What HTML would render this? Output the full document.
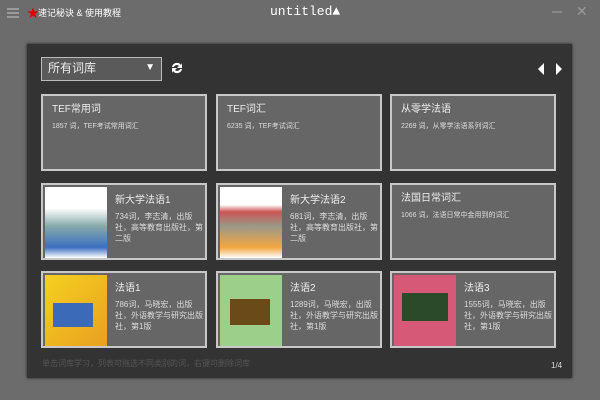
<!DOCTYPE html>
<html><head><meta charset="utf-8"><style>
*{margin:0;padding:0;box-sizing:border-box}
body{width:600px;height:400px;background:#6c6c6c;font-family:"Liberation Sans","Noto Sans CJK SC",sans-serif;color:#eee;position:relative;overflow:hidden}
.a{position:absolute}
.panel{left:27px;top:44px;width:545px;height:334px;background:#333;box-shadow:0 0 3px #222}
.card{position:absolute;width:166px;height:77px;background:#666;border:2px solid #c8c8c8;font-size:9px}
.card .t{position:absolute;left:9px;top:4px;font-size:10px;color:#eee}
.card .d{position:absolute;left:9px;top:25px;font-size:7px;color:#ddd}
.card.b .t{left:72px;top:6px}
.card.b .d{left:72px;top:26px;width:88px;line-height:11px;font-size:8px}
.cov{position:absolute;left:2px;top:2px;width:62px;height:71px}
</style></head><body>
<div class="a" style="left:7px;top:8px;width:12px;height:10px;border-top:2px solid #999;border-bottom:2px solid #999"><div style="margin-top:2px;border-top:2px solid #999"></div></div>
<div class="a" style="left:27px;top:4px;color:#d00;font-size:12px">★</div>
<div class="a" style="left:38px;top:6px;font-size:9px;color:#fff">速记秘诀 &amp; 使用教程</div>
<div class="a" style="left:270px;top:4px;font-size:13px;color:#fff;font-family:'Liberation Mono',monospace">untitled▲</div>
<div class="a" style="left:552px;top:11px;width:10px;height:2px;background:#888"></div>
<div class="a" style="left:576px;top:3px;font-size:14px;color:#999">✕</div>
<div class="a panel"></div>
<div class="a" style="left:41px;top:57px;width:121px;height:24px;background:#5a5a5a;border:1px solid #bbb;font-size:12px;line-height:20px;padding:0 6px;color:#eee">所有词库<span style="position:absolute;right:6px;top:0;font-size:10px;color:#fff">▼</span></div>
<svg class="a" style="left:170px;top:61px" width="14" height="14" viewBox="0 0 14 14"><path d="M2 6A5 5 0 0 1 11 4L12 2 12 7 7 7 9 5A3 3 0 0 0 4 6Z M12 8A5 5 0 0 1 3 10L2 12 2 7 7 7 5 9A3 3 0 0 0 10 8Z" fill="#fff"/></svg>
<svg class="a" style="left:536px;top:63px" width="30" height="12"><path d="M8 0L2 6 8 12Z M20 0L26 6 20 12Z" fill="#fff"/></svg>

<div class="card" style="left:41px;top:94px"><div class="t">TEF常用词</div><div class="d">1857 词，TEF考试常用词汇</div></div>
<div class="card" style="left:216px;top:94px"><div class="t">TEF词汇</div><div class="d">6235 词，TEF考试词汇</div></div>
<div class="card" style="left:390px;top:94px"><div class="t">从零学法语</div><div class="d">2269 词，从零学法语系列词汇</div></div>

<div class="card b" style="left:41px;top:183px"><div class="cov" style="background:linear-gradient(#fff 30%,#8aa 55%,#3b6fc0 85%,#fff)"></div><div class="t">新大学法语1</div><div class="d">734词，李志清，出版社，高等教育出版社，第二版</div></div>
<div class="card b" style="left:216px;top:183px"><div class="cov" style="background:linear-gradient(#fff 25%,#c55 35%,#998 55%,#f3a640 85%,#fff)"></div><div class="t">新大学法语2</div><div class="d">681词，李志清，出版社，高等教育出版社，第二版</div></div>
<div class="card" style="left:390px;top:183px"><div class="t">法国日常词汇</div><div class="d">1066 词，法语日常中金用到的词汇</div></div>

<div class="card b" style="left:41px;top:271px"><div class="cov" style="background:linear-gradient(135deg,#f5d020,#e8a020);"><div style="position:absolute;left:8px;top:28px;width:40px;height:24px;background:#3a6ab8"></div></div><div class="t">法语1</div><div class="d">786词，马晓宏，出版社，外语教学与研究出版社，第1版</div></div>
<div class="card b" style="left:216px;top:271px"><div class="cov" style="background:#9cd08a"><div style="position:absolute;left:10px;top:24px;width:40px;height:26px;background:#6a4a18"></div></div><div class="t">法语2</div><div class="d">1289词，马晓宏，出版社，外语教学与研究出版社，第1版</div></div>
<div class="card b" style="left:390px;top:271px"><div class="cov" style="background:#d65a78"><div style="position:absolute;left:8px;top:18px;width:46px;height:28px;background:#2a4a2a"></div></div><div class="t">法语3</div><div class="d">1555词，马晓宏，出版社，外语教学与研究出版社，第1版</div></div>

<div class="a" style="left:42px;top:358px;font-size:8px;color:#555">单击词库学习，列表可拖选不同类别的词，右键可删除词库</div>
<div class="a" style="left:551px;top:361px;font-size:8px;color:#ddd">1/4</div>
</body></html>
